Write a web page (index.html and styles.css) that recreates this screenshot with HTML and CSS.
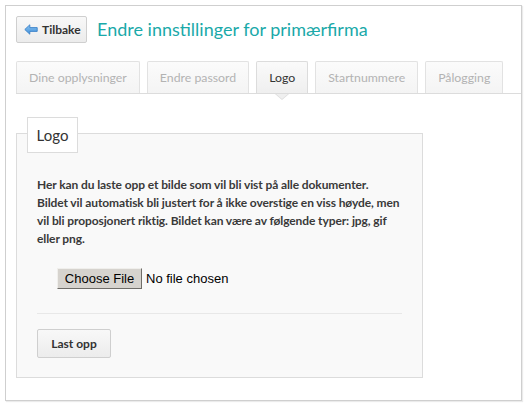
FILE: index.html
```html
<!DOCTYPE html>
<html lang="no">
<head>
<meta charset="utf-8">
<title>Endre innstillinger for primærfirma</title>
<link rel="stylesheet" href="styles.css">
</head>
<body>
<div class="frame">
  <div class="header">
    <button class="btn back-btn" type="button">
      <svg class="back-icon" width="14" height="11" viewBox="0 0 14 11">
        <defs>
          <linearGradient id="ag" x1="0" y1="0" x2="0" y2="1">
            <stop offset="0" stop-color="#8cc4f2"/>
            <stop offset="1" stop-color="#3f8fd8"/>
          </linearGradient>
        </defs>
        <path d="M0.8 5.5 L5.8 0.8 L5.8 3.6 L13.2 3.6 L13.2 7.4 L5.8 7.4 L5.8 10.2 Z" fill="url(#ag)" stroke="#3b82c8" stroke-width="0.9" stroke-linejoin="round"/>
      </svg>
      <span>Tilbake</span>
    </button>
    <h1 class="title">Endre innstillinger for primærfirma</h1>
  </div>

  <ul class="tabs">
    <li class="tab">Dine opplysninger</li>
    <li class="tab">Endre passord</li>
    <li class="tab active">Logo</li>
    <li class="tab">Startnummere</li>
    <li class="tab">Pålogging</li>
  </ul>

  <div class="panel">
    <div class="legend">Logo</div>
    <p class="info">Her kan du laste opp et bilde som vil bli vist på alle dokumenter.<br>Bildet vil automatisk bli justert for å ikke overstige en viss høyde, men<br>vil bli proposjonert riktig. Bildet kan være av følgende typer: jpg, gif<br>eller png.</p>
    <div class="file-row">
      <span class="file-btn">Choose File</span>
      <span class="file-name">No file chosen</span>
    </div>
    <div class="divider"></div>
    <button class="btn upload-btn" type="button">Last opp</button>
  </div>
</div>
</body>
</html>
```

FILE: styles.css
```css
* { box-sizing: border-box; }

body {
  margin: 0;
  background: #ffffff;
  font-family: Lato, "Open Sans", sans-serif;
  color: #333;
}

.frame {
  margin: 5px;
  width: 517px;
  height: 396px;
  border: 1px solid #cfcfcf;
  box-shadow: 1px 1px 1px rgba(0,0,0,0.08);
  padding: 10px 0 0 10px;
  background: #fff;
}

.header {
  display: flex;
  align-items: center;
  gap: 10px;
  height: 27px;
}

.btn {
  font-family: Lato, "Open Sans", sans-serif;
  font-weight: bold;
  font-size: 12px;
  color: #333;
  background: linear-gradient(#f8f8f8, #ececec);
  border: 1px solid #cfcfcf;
  border-radius: 2px;
  margin: 0;
  cursor: pointer;
}

.back-btn {
  display: inline-flex;
  align-items: center;
  gap: 4px;
  width: 71px;
  height: 27px;
  padding: 0 0 0 7px;
}

.back-icon { display: block; }

.title {
  margin: 0;
  font-size: 18px;
  font-weight: normal;
  color: #1aa9a9;
  line-height: 27px;
  white-space: nowrap;
}

.tabs {
  list-style: none;
  margin: 18px 0 0 0;
  padding: 0;
  display: flex;
  gap: 7px;
  border-bottom: 1px solid #dcdcdc;
  height: 33px;
}

.tab {
  position: relative;
  flex-shrink: 0;
  white-space: nowrap;
  height: 32px;
  padding: 0 12px;
  line-height: 31px;
  font-size: 12.3px;
  color: #b3b3b3;
  background: linear-gradient(#fbfbfb, #f4f4f4);
  border: 1px solid #e2e2e2;
  border-bottom: none;
  border-radius: 2px 2px 0 0;
}

.tab.active {
  color: #333;
  background: linear-gradient(#fafafa, #efefef);
  border-color: #dcdcdc;
}

.tab.active::before,
.tab.active::after {
  content: "";
  position: absolute;
  left: 50%;
  width: 0;
  height: 0;
  border-style: solid;
}

.tab.active::before {
  top: 32px;
  margin-left: -7px;
  border-width: 6px 7px 0 7px;
  border-color: #dcdcdc transparent transparent transparent;
}

.tab.active::after {
  top: 32px;
  margin-left: -6px;
  border-width: 5px 6px 0 6px;
  border-color: #efefef transparent transparent transparent;
}

.panel {
  margin-top: 39px;
  width: 407px;
  border: 1px solid #dcdcdc;
  background: #f9f9f9;
  padding: 0 20px 19px 20px;
}

.legend {
  display: block;
  width: 51px;
  text-align: center;
  margin: -17px 0 0 -10px;
  height: 36px;
  padding: 0;
  line-height: 34px;
  font-size: 15px;
  color: #333;
  background: #fff;
  border: 1px solid #dcdcdc;
}

.info {
  margin: 23px 0 0 0;
  font-size: 12px;
  font-weight: bold;
  line-height: 18px;
  letter-spacing: -0.1px;
  color: #3a3a3a;
  white-space: nowrap;
}

.file-row {
  margin: 20px 0 0 20px;
  display: flex;
  align-items: center;
  gap: 4px;
  height: 21px;
  font-family: "Liberation Sans", Arial, sans-serif;
  font-size: 13px;
  color: #000;
}

.file-btn {
  display: inline-block;
  height: 21px;
  width: 85px;
  line-height: 19px;
  text-align: center;
  background: #d6d3ce;
  border: 1px solid;
  border-color: #f0efec #6f6d69 #6f6d69 #f0efec;
}

.divider {
  margin-top: 24px;
  height: 1px;
  background: #e8e8e8;
}

.upload-btn {
  display: block;
  margin-top: 15px;
  width: 74px;
  height: 29px;
  padding: 0;
}
```
